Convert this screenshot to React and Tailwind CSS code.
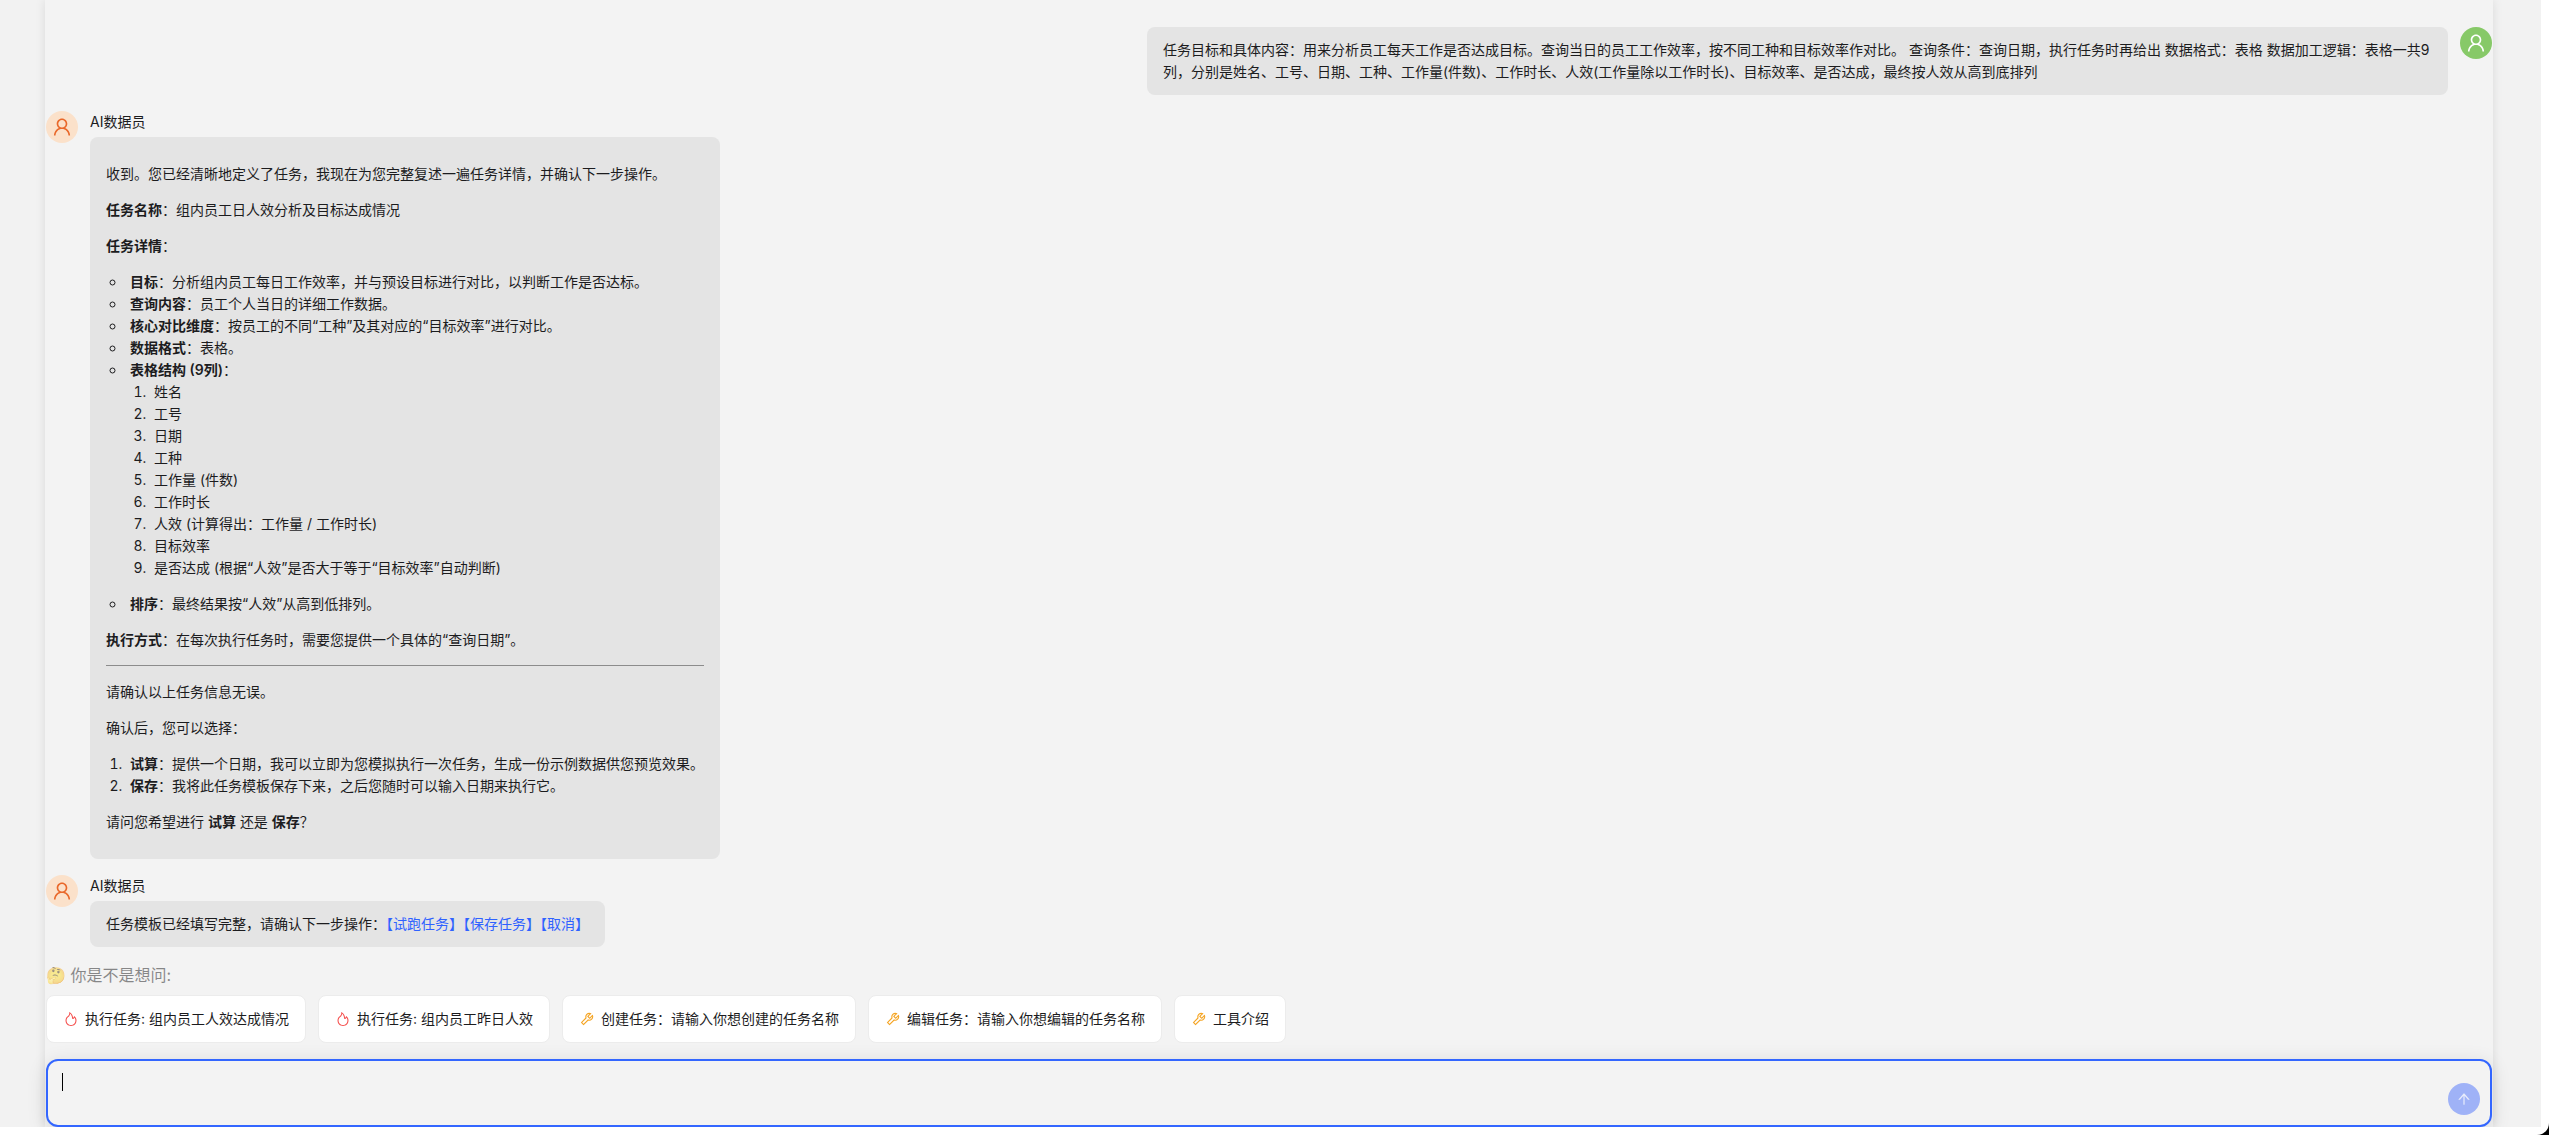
import {
  AiOutlineArrowUp,
  AiOutlineFire,
  AiOutlineTool,
  AiOutlineUser,
} from "react-icons/ai";

const columns = [
  "姓名",
  "工号",
  "日期",
  "工种",
  "工作量 (件数)",
  "工作时长",
  "人效 (计算得出：工作量 / 工作时长)",
  "目标效率",
  "是否达成 (根据“人效”是否大于等于“目标效率”自动判断)",
];

const suggestions = [
  { kind: "fire", text: "执行任务: 组内员工人效达成情况" },
  { kind: "fire", text: "执行任务: 组内员工昨日人效" },
  { kind: "tool", text: "创建任务：请输入你想创建的任务名称" },
  { kind: "tool", text: "编辑任务：请输入你想编辑的任务名称" },
  { kind: "tool", text: "工具介绍" },
];

function Avatar({ user = false }) {
  return (
    <div
      className={
        user
          ? "flex size-8 shrink-0 items-center justify-center rounded-full bg-[#87c968] text-white"
          : "flex size-8 shrink-0 items-center justify-center rounded-full bg-[#fbe1ca] text-[#e9682a]"
      }
    >
      <AiOutlineUser className="size-[22px]" />
    </div>
  );
}

function AssistantMessage({ children }) {
  return (
    <article className="flex items-start gap-3">
      <Avatar />
      <div className="flex flex-col items-start gap-1">
        <header>AI数据员</header>
        <div className="rounded-lg bg-[#e4e4e4] px-4 py-3">{children}</div>
      </div>
    </article>
  );
}

function Term({ children }) {
  return <strong className="font-semibold">{children}</strong>;
}

export default function App() {
  return (
    <div className="bg-black">
      <div className="min-h-screen rounded-br-xl bg-white pr-2 pb-2 font-[Inter,'Noto_Sans_CJK_SC',sans-serif] text-sm/[22px] text-[#1c1c1e]">
        <div className="overflow-hidden bg-[#f2f2f2] pr-12 pl-[45px]">
          <main className="bg-[#f3f3f3] px-px pt-[27px] shadow-[0_0_10px_rgba(0,0,0,0.1)]">
            <section className="flex flex-col gap-4" aria-label="对话">
              <article className="ml-auto flex w-full max-w-[1345px] items-start justify-end gap-3">
                <div className="grow rounded-lg bg-[#e4e4e4] px-4 py-3">
                  任务目标和具体内容：用来分析员工每天工作是否达成目标。查询当日的员工工作效率，按不同工种和目标效率作对比。
                  查询条件：查询日期，执行任务时再给出 数据格式：表格
                  数据加工逻辑：表格一共9列，分别是姓名、工号、日期、工种、工作量(件数)、工作时长、人效(工作量除以工作时长)、目标效率、是否达成，最终按人效从高到底排列
                </div>
                <Avatar user />
              </article>

              <AssistantMessage>
                <div className="flex flex-col gap-3.5 py-3.5">
                  <p>收到。您已经清晰地定义了任务，我现在为您完整复述一遍任务详情，并确认下一步操作。</p>
                  <p>
                    <Term>任务名称</Term>：组内员工日人效分析及目标达成情况
                  </p>
                  <p>
                    <Term>任务详情</Term>：
                  </p>
                  <ul className="list-[circle] pl-5">
                    <li className="pl-1">
                      <Term>目标</Term>：分析组内员工每日工作效率，并与预设目标进行对比，以判断工作是否达标。
                    </li>
                    <li className="pl-1">
                      <Term>查询内容</Term>：员工个人当日的详细工作数据。
                    </li>
                    <li className="pl-1">
                      <Term>核心对比维度</Term>：按员工的不同“工种”及其对应的“目标效率”进行对比。
                    </li>
                    <li className="pl-1">
                      <Term>数据格式</Term>：表格。
                    </li>
                    <li className="pl-1">
                      <Term>表格结构 (9列)</Term>：
                      <ol className="mb-3.5 list-decimal pl-5">
                        {columns.map((name) => (
                          <li key={name} className="pl-1">
                            {name}
                          </li>
                        ))}
                      </ol>
                    </li>
                    <li className="pl-1">
                      <Term>排序</Term>：最终结果按“人效”从高到低排列。
                    </li>
                  </ul>
                  <p>
                    <Term>执行方式</Term>：在每次执行任务时，需要您提供一个具体的“查询日期”。
                  </p>
                  <hr className="h-0.5 border-t-[#8c8c8c]" />
                  <p>请确认以上任务信息无误。</p>
                  <p>确认后，您可以选择：</p>
                  <ol className="list-decimal pl-5">
                    <li className="pl-1">
                      <Term>试算</Term>：提供一个日期，我可以立即为您模拟执行一次任务，生成一份示例数据供您预览效果。
                    </li>
                    <li className="pl-1">
                      <Term>保存</Term>：我将此任务模板保存下来，之后您随时可以输入日期来执行它。
                    </li>
                  </ol>
                  <p>
                    请问您希望进行 <Term>试算</Term> 还是 <Term>保存</Term>？
                  </p>
                </div>
              </AssistantMessage>

              <AssistantMessage>
                任务模板已经填写完整，请确认下一步操作：
                <a href="#trial" className="text-[#2f62ff]">【试跑任务】</a>
                <a href="#save" className="text-[#2f62ff]">【保存任务】</a>
                <a href="#cancel" className="text-[#2f62ff]">【取消】</a>
              </AssistantMessage>
            </section>

            <section className="pt-4 pb-4" aria-label="推荐问题">
              <h2 className="text-base/6 opacity-50">🤔 你是不是想问:</h2>
              <div className="mt-2 flex flex-wrap gap-3">
                {suggestions.map(({ kind, text }) => (
                  <button
                    key={text}
                    type="button"
                    className="flex items-center gap-1.5 rounded-lg border border-[#ececec] bg-white px-4 py-3"
                  >
                    {kind === "fire" ? (
                      <AiOutlineFire className="size-4 text-[#f5504e]" />
                    ) : (
                      <AiOutlineTool className="size-4 text-[#f5a524]" />
                    )}
                    {text}
                  </button>
                ))}
              </div>
            </section>

            <form
              className="flex h-[68px] items-end rounded-xl border-2 border-[#3366ff] bg-[#f3f3f3] py-2.5 pr-2.5 pl-3.5 shadow-[0_4px_20px_rgba(0,0,0,0.12)]"
              onSubmit={(event) => event.preventDefault()}
            >
              <span className="mt-0.5 h-[18px] w-px self-start bg-black" aria-hidden="true" />
              <textarea
                aria-label="输入消息"
                className="h-11 grow resize-none bg-transparent caret-transparent outline-none"
              />
              <button
                type="submit"
                aria-label="发送"
                className="flex size-8 items-center justify-center rounded-full bg-[#9fb2f7] text-[#e8ecfb]"
              >
                <AiOutlineArrowUp className="size-4" />
              </button>
            </form>
          </main>
        </div>
      </div>
    </div>
  );
}
